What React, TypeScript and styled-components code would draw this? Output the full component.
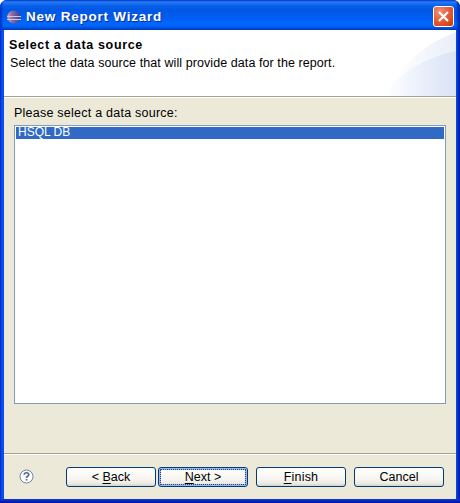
import React from "react";
import styled, { createGlobalStyle } from "styled-components";

const Global = createGlobalStyle`
  * { box-sizing: border-box; }
  body { margin: 0; background: #fff; overflow: hidden; }
`;

const Window = styled.div`
  width: 460px;
  height: 503px;
  display: flex;
  flex-direction: column;
  border-radius: 7px 7px 0 0;
  overflow: hidden;
  background: #0a46dc;
  font: 12.5px "Liberation Sans", Arial, sans-serif;
  color: #000;
  white-space: pre;
`;

const TitleBar = styled.header`
  height: 30px;
  flex: none;
  display: flex;
  align-items: center;
  padding: 3px 6px 0 6px;
  background: linear-gradient(
    #0a4fc8 0, #2b7df8 2px, #1c70f4 3px, #0860e8 6px, #0057e2 10px,
    #005cf0 17px, #0066ff 23px, #0064fc 26px, #0050d8 28px, #0042c4 30px
  );
  box-shadow: inset 2px 0 2px #0036c8, inset -3px 0 2px #0034b8;
`;

const Title = styled.h1`
  flex: 1;
  margin: 0 0 0 4px;
  font-size: 13.5px;
  line-height: 16px;
  font-weight: bold;
  color: #fff;
  text-shadow: 1px 1px 0 #0a2f90;
  letter-spacing: 0.78px;
`;

const CloseButton = styled.button`
  width: 21px;
  height: 21px;
  padding: 0;
  display: grid;
  place-items: center;
  border: 1px solid #fff;
  border-radius: 3px;
  background: radial-gradient(circle at 30% 25%, #f09078 0, #e4603c 45%, #d84418 80%, #b83810 100%);
`;

const Frame = styled.div`
  flex: 1;
  display: flex;
  flex-direction: column;
  padding: 0 4px 4px;
  background:
    linear-gradient(#0a3cdc, #0010a0) bottom / 100% 4px no-repeat,
    linear-gradient(to right, #0028c8 0, #0c50f0 2px, #0a4ce8 4px, transparent 4px),
    linear-gradient(to left, #001c98 0, #0030c8 2px, #0a50ee 4px, transparent 4px);
`;

const Banner = styled.section`
  height: 66px;
  display: flex;
  justify-content: space-between;
  background: #fff;
`;

const BannerText = styled.div`
  padding: 6px 0 0 5px;
`;

const Heading = styled.h2`
  margin: 0;
  font-size: 12.5px;
  line-height: 18px;
  font-weight: bold;
  letter-spacing: 0.65px;
`;

const Line = styled.p<{ $spacing: number; $indent?: number }>`
  margin: 0;
  padding-left: ${(p) => p.$indent ?? 0}px;
  line-height: 18px;
  letter-spacing: ${(p) => p.$spacing}px;
`;

const Swoosh = styled.svg`
  flex: none;
  margin-left: -120px;
`;

const Rule = styled.hr`
  width: 100%;
  height: 2px;
  flex: none;
  margin: 0;
  border: 0;
  border-top: 1px solid #a5a391;
  background: #fff;
`;

const Content = styled.main`
  height: 355px;
  padding: 6px 10px 0;
  background: #ece9d8;
`;

const List = styled.div`
  height: 279px;
  margin-top: 3px;
  padding: 1px;
  border: 1px solid #7f9db9;
  background: #fff;
`;

const Item = styled.div`
  height: 12px;
  padding-left: 2px;
  line-height: 11px;
  font-size: 12px;
  color: #fff;
  background: #316ac5;
`;

const Footer = styled.footer`
  flex: 1;
  display: flex;
  align-items: flex-start;
  padding: 12px 12px 0 14px;
  background: #ece9d8;
`;

const Help = styled.svg`
  margin: 2px 0 0 1px;
`;

const Buttons = styled.div`
  flex: 1;
  display: flex;
  justify-content: flex-end;
  gap: 8px;
`;

const Pair = styled.div`
  display: flex;
  gap: 2px;
`;

const Button = styled.button<{ $focused?: boolean; $spacing?: number }>`
  width: 90px;
  height: 20px;
  padding: 0;
  border: 1px solid #003c74;
  border-radius: 3px;
  background: linear-gradient(#fff, #f6f5f0 60%, #ecebe5 85%, #d8d2c6);
  font: 12.5px "Liberation Sans", Arial, sans-serif;
  line-height: 17px;
  letter-spacing: ${(p) => p.$spacing ?? 0}px;
  color: #000;
  outline: ${(p) => (p.$focused ? "1px dotted #304878" : "none")};
  outline-offset: -3px;
  box-shadow: ${(p) => (p.$focused ? "inset 0 0 0 2px #9ab8f0" : "none")};
`;

const Mnemonic = styled.span`
  text-decoration: underline;
  text-underline-offset: 2px;
  text-decoration-thickness: 1px;
`;

const EclipseIcon = () => (
  <svg width="16" height="14" viewBox="0 0 16 14">
    <defs>
      <linearGradient id="orb" x1="0" x2="1">
        <stop offset="0" stopColor="#d8a0b0" />
        <stop offset="0.35" stopColor="#8870a8" />
        <stop offset="1" stopColor="#443c88" />
      </linearGradient>
    </defs>
    <circle cx="7.8" cy="7" r="6.5" fill="url(#orb)" />
    <path d="M1 6.5H15M1 9.5H15" stroke="#ccc8ec" />
  </svg>
);

export default function App() {
  return (
    <>
      <Global />
      <Window>
        <TitleBar>
          <EclipseIcon />
          <Title>New Report Wizard</Title>
          <CloseButton aria-label="Close">
            <svg width="13" height="13" viewBox="0 0 13 13">
              <path d="M2 2L11 11M11 2L2 11" stroke="#fff" strokeWidth="2.2" />
            </svg>
          </CloseButton>
        </TitleBar>
        <Frame>
          <Banner>
            <BannerText>
              <Heading>Select a data source</Heading>
              <Line $spacing={0.08} $indent={1}>Select the data source that will provide data for the report.</Line>
            </BannerText>
            <Swoosh width="72" height="66" viewBox="0 0 72 66">
              <defs>
                <linearGradient id="outer" x1="0" x2="1">
                  <stop offset="0" stopColor="#fff" />
                  <stop offset="0.25" stopColor="#fcfdff" />
                  <stop offset="1" stopColor="#e8eef9" />
                </linearGradient>
                <linearGradient id="inner" x1="0" x2="1">
                  <stop offset="0" stopColor="#e9eefa" stopOpacity="0" />
                  <stop offset="1" stopColor="#dae3f6" />
                </linearGradient>
              </defs>
              <path d="M0 66Q24 20 72 2V66Z" fill="url(#outer)" />
              <path d="M0 66Q22 32 72 21V66Z" fill="url(#inner)" />
            </Swoosh>
          </Banner>
          <Rule />
          <Content>
            <Line $spacing={0.24}>Please select a data source:</Line>
            <List>
              <Item>HSQL DB</Item>
            </List>
          </Content>
          <Rule />
          <Footer>
            <Help width="15" height="15" viewBox="0 0 15 15">
              <circle cx="7.5" cy="7.5" r="6.5" fill="#fff" stroke="#7484a4" />
              <path d="M5.2 5.7Q5.3 3.8 7.5 3.8T9.8 5.6Q9.8 6.6 8.6 7.2T7.5 9" fill="none" stroke="#53658c" strokeWidth="1.6" />
              <path d="M6.7 10h1.7v1.6H6.7z" fill="#53658c" />
            </Help>
            <Buttons>
              <Pair>
                <Button>&lt; <Mnemonic>B</Mnemonic>ack</Button>
                <Button $focused><Mnemonic>N</Mnemonic>ext &gt;</Button>
              </Pair>
              <Button $spacing={0.2}><Mnemonic>F</Mnemonic>inish</Button>
              <Button>Cancel</Button>
            </Buttons>
          </Footer>
        </Frame>
      </Window>
    </>
  );
}
